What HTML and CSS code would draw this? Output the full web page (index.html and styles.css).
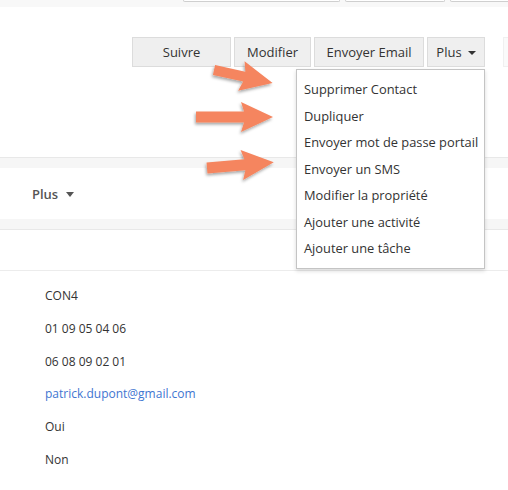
FILE: index.html
```html
<!DOCTYPE html>
<html lang="fr">
<head>
<meta charset="utf-8">
<title>Contact</title>
<link rel="stylesheet" href="styles.css">
</head>
<body>
<div class="page">
  <div class="topbar">
    <span class="tb-field tb-1"></span>
    <span class="tb-field tb-2"></span>
    <span class="tb-field tb-3"></span>
  </div>

  <div class="actions">
    <button class="btn btn-suivre">Suivre</button>
    <button class="btn btn-modifier">Modifier</button>
    <button class="btn btn-email">Envoyer Email</button>
    <div class="dropdown">
      <button class="btn btn-plus">Plus <span class="caret"></span></button>
      <ul class="menu">
        <li>Supprimer Contact</li>
        <li>Dupliquer</li>
        <li>Envoyer mot de passe portail</li>
        <li>Envoyer un SMS</li>
        <li>Modifier la propriété</li>
        <li>Ajouter une activité</li>
        <li>Ajouter une tâche</li>
      </ul>
    </div>
    <span class="btn btn-ghost"></span>
  </div>

  <div class="section">
    <div class="band"></div>
    <div class="section-head">Plus <span class="caret caret-dark"></span></div>
    <div class="band band-bottom"></div>
  </div>

  <div class="details">
    <div class="row">CON4</div>
    <div class="row">01 09 05 04 06</div>
    <div class="row">06 08 09 02 01</div>
    <div class="row"><a class="link">patrick.dupont@gmail.com</a></div>
    <div class="row">Oui</div>
    <div class="row">Non</div>
  </div>

  <svg class="arrows" width="508" height="490" viewBox="0 0 508 490">
    <defs>
      <filter id="sh" x="-20%" y="-40%" width="140%" height="180%">
        <feDropShadow dx="-1" dy="2" stdDeviation="1.6" flood-color="#000" flood-opacity="0.35"/>
      </filter>
    </defs>
    <g fill="#f5855f" filter="url(#sh)">
      <polygon transform="translate(214 70) rotate(12.4)" points="0,-5 31,-5 28,-15 60,0 28,15 31,5 0,5"/>
      <polygon transform="translate(196 117) rotate(0)" points="0,-5.5 48,-5.5 45,-15 77,0 45,15 48,5.5 0,5.5"/>
      <polygon transform="translate(207 168) rotate(-5)" points="0,-5.5 38,-5.5 35,-15 67,0 35,15 38,5.5 0,5.5"/>
    </g>
  </svg>
</div>
</body>
</html>
```

FILE: styles.css
```css
html, body {
  margin: 0;
  padding: 0;
  overflow: hidden;
  background: #fff;
}

.page {
  position: relative;
  width: 508px;
  height: 490px;
  overflow: hidden;
  font-family: "Open Sans", "Noto Sans", sans-serif;
  font-size: 12px;
  color: #333;
}

.topbar {
  height: 7px;
  background: #f8f8f8;
  display: flex;
  gap: 5px;
  padding-left: 183px;
  align-items: flex-start;
}

.tb-field {
  display: block;
  height: 1px;
  background: #fff;
  border: 1px solid #cfcfcf;
  border-top: none;
  border-radius: 0 0 3px 3px;
  flex: none;
}
.tb-1 { width: 155px; }
.tb-2 { width: 98px; }
.tb-3 { width: 80px; }

.actions {
  display: flex;
  gap: 3px;
  margin-top: 30px;
  padding-left: 132px;
  height: 30px;
}

.btn {
  box-sizing: border-box;
  height: 30px;
  border: 1px solid #dcdcdc;
  background: #efefef;
  font-family: inherit;
  font-size: 13px;
  color: #333;
  padding: 0;
  margin: 0;
  flex: none;
  display: flex;
  align-items: center;
  justify-content: center;
}
.btn-suivre { width: 99px; }
.btn-modifier { width: 77px; }
.btn-email { width: 110px; }
.btn-plus { width: 58px; gap: 6px; }
.btn-ghost {
  width: 40px;
  margin-left: 15px;
  background: #fafafa;
  border-color: #f0f0f0;
}

.caret {
  display: inline-block;
  width: 0;
  height: 0;
  border-left: 4px solid transparent;
  border-right: 4px solid transparent;
  border-top: 4px solid #333;
  margin-top: 2px;
}
.caret-dark { border-top-color: #555; border-left-width: 4.5px; border-right-width: 4.5px; border-top-width: 5px; margin-left: 8px; }

.dropdown {
  position: relative;
  flex: none;
}

.menu {
  position: absolute;
  top: 32px;
  right: 0;
  width: 189px;
  box-sizing: border-box;
  margin: 0;
  padding: 6px 0;
  list-style: none;
  background: #fff;
  border: 1px solid #c4c4c4;
  box-shadow: 0 2px 4px rgba(0,0,0,0.15);
  z-index: 5;
}
.menu li {
  padding: 0 7px;
  line-height: 26.5px;
  font-size: 12.85px;
  white-space: nowrap;
  color: #333;
}

.section {
  margin-top: 90px;
}
.band {
  height: 10px;
  background: #f6f6f6;
  border-top: 1px solid #e8e8e8;
}
.band-bottom {
  border-top: none;
  border-bottom: 1px solid #e8e8e8;
}
.section-head {
  height: 51px;
  display: flex;
  align-items: center;
  padding-left: 32px;
  font-size: 13px;
  font-weight: 600;
  color: #555;
}

.details {
  margin-top: 40px;
  border-top: 1px solid #ececec;
  padding-top: 9px;
  padding-left: 45px;
}
.row {
  line-height: 32.8px;
  font-size: 12px;
  color: #333;
}
.link {
  color: #3f76d1;
  text-decoration: none;
}

.arrows {
  position: absolute;
  left: 0;
  top: 0;
  pointer-events: none;
  z-index: 10;
}
```
